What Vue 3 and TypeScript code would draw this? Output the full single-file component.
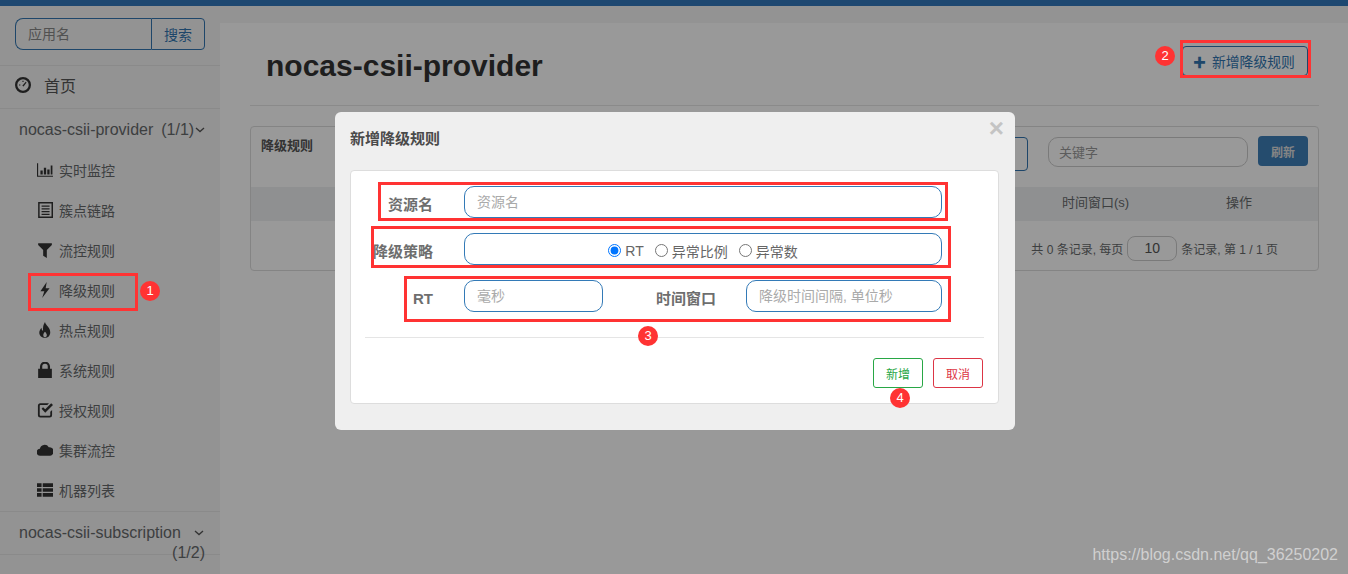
<template>
  <div class="page">
    <div class="topbar"></div>
    <div class="layout">
      <aside class="sidebar">
        <div class="search">
          <input class="search-input" placeholder="应用名" />
          <button class="search-btn">搜索</button>
        </div>
        <div class="home">
          <svg class="home-icon" viewBox="1 1 14 14"><path fill-rule="evenodd" :d="icons.gauge" /></svg>
          <span>首页</span>
        </div>
        <div class="app-row app-row-first">
          <span>nocas-csii-provider</span>
          <span class="count">(1/1)</span>
          <svg class="chevron" viewBox="0 0 10 6"><path d="M1 1l4 3.6L9 1" /></svg>
        </div>
        <ul class="nav">
          <li v-for="item in navItems" :key="item.label" class="nav-item">
            <svg class="nav-icon" viewBox="1 1 14 14"><path fill-rule="evenodd" :d="item.icon" /></svg>
            <span>{{ item.label }}</span>
          </li>
        </ul>
        <div class="app-row app-row-second">
          <span>nocas-csii-subscription</span>
          <svg class="chevron" viewBox="0 0 10 6"><path d="M1 1l4 3.6L9 1" /></svg>
          <span class="count-wrap">(1/2)</span>
        </div>
      </aside>

      <main class="main">
        <header class="main-header">
          <h1>nocas-csii-provider</h1>
          <button class="add-btn"><span class="plus">✚</span>新增降级规则</button>
        </header>
        <section class="panel">
          <div class="panel-head">
            <span class="panel-title">降级规则</span>
            <div class="panel-tools">
              <div class="hidden-select"></div>
              <input class="keyword" placeholder="关键字" />
              <button class="refresh">刷新</button>
            </div>
          </div>
          <div class="table-head">
            <span class="col-window">时间窗口(s)</span>
            <span class="col-action">操作</span>
          </div>
          <div class="pager">
            <span>共 0 条记录, 每页</span>
            <input class="page-size" value="10" />
            <span>条记录, 第 1 / 1 页</span>
          </div>
        </section>
      </main>
    </div>

    <div class="overlay">
      <div class="modal">
        <div class="modal-title">新增降级规则</div>
        <span class="close">×</span>
        <form class="card" @submit.prevent>
          <div class="row">
            <label class="label">资源名</label>
            <input class="field grow" placeholder="资源名" />
          </div>
          <div class="row">
            <label class="label">降级策略</label>
            <div class="field grow radios">
              <label v-for="(opt, i) in strategies" :key="opt" class="radio">
                <input type="radio" name="grade" :checked="i === 0" />{{ opt }}
              </label>
            </div>
          </div>
          <div class="row">
            <label class="label">RT</label>
            <input class="field rt" placeholder="毫秒" />
            <label class="label label-window">时间窗口</label>
            <input class="field grow" placeholder="降级时间间隔, 单位秒" />
          </div>
          <div class="divider"></div>
          <div class="actions">
            <button class="btn btn-ok">新增</button>
            <button class="btn btn-cancel">取消</button>
          </div>
        </form>
      </div>
    </div>

    <!-- red marks drawn over the screenshot -->
    <div v-for="m in marks" :key="m.top + '-' + m.left" class="mark" :style="m"></div>
    <div v-for="b in badges" :key="b.n" class="badge" :style="{ left: b.x + 'px', top: b.y + 'px' }">{{ b.n }}</div>
    <div class="watermark">https://blog.csdn.net/qq_36250202</div>
  </div>
</template>

<script setup lang="ts">
const icons = {
  gauge:
    "M8 1a7 7 0 1 1 0 14A7 7 0 0 1 8 1z M8 3a5 5 0 1 0 0 10A5 5 0 0 0 8 3z M7.4 8.6l3-3.4.7.6-2.6 3.6z M4.5 7.5h1.2v1H4.5z M7.5 4.2h1v1.2h-1z",
  bars: "M1 2h1v11h13v1H1z M4 8.5h2V12H4z M7 6h2v6H7z M10 7.5h2V12h-2z M13 4h1.5v8H13z",
  list: "M2 1h13v14H2z M3.3 2.3v11.4h10.4V2.3z M5 4h7v1.2H5z M5 6.4h7v1.2H5z M5 8.8h7V10H5z M5 11.2h7v1.2H5z",
  filter: "M2 2h12v1.6L9.6 8v7L6.4 13V8L2 3.6z",
  bolt: "M9.5 1L4 9h3.4L5.5 15 12 6.5H8.6z",
  fire: "M8 1c.5 3 4.6 4.5 4.6 9 0 3-2 5-4.6 5S3 13 3 10.5c0-2 1-3.5 2-4.5 0 1.5.5 2.5 1.3 2.7C6 6 6.5 3 8 1z M8 9.5c-1 1-1.5 2-1.5 3 0 1 .7 1.8 1.5 1.8s1.6-.8 1.6-1.8c0-1-.7-2-1.6-3z",
  lock: "M2 7h1.6V5a4.4 4.4 0 0 1 8.8 0v2H14v8H2z M5.6 7h4.8V5a2.4 2.4 0 0 0-4.8 0z",
  check:
    "M4 2h7.5L10 3.6H4a.6.6 0 0 0-.6.6v8.2c0 .3.3.6.6.6h8c.3 0 .6-.3.6-.6V9.6L14.2 8v4.4A2.2 2.2 0 0 1 12 14.6H4a2.2 2.2 0 0 1-2.2-2.2V4.2A2.2 2.2 0 0 1 4 2z M5 6.8l1.3-1.3L8.2 7.4 13.4 2.2 15 3.6 8.2 10.4z",
  cloud: "M4 13a3 3 0 0 1-.5-6 4.2 4.2 0 0 1 7.8-1.4A3.7 3.7 0 0 1 12.5 13z",
  rows: "M1 2h4v3.4H1z M6 2h9v3.4H6z M1 6.4h4v3.2H1z M6 6.4h9v3.2H6z M1 10.6h4V14H1z M6 10.6h9V14H6z",
};

const navItems = [
  { label: "实时监控", icon: icons.bars },
  { label: "簇点链路", icon: icons.list },
  { label: "流控规则", icon: icons.filter },
  { label: "降级规则", icon: icons.bolt },
  { label: "热点规则", icon: icons.fire },
  { label: "系统规则", icon: icons.lock },
  { label: "授权规则", icon: icons.check },
  { label: "集群流控", icon: icons.cloud },
  { label: "机器列表", icon: icons.rows },
];

const strategies = ["RT", "异常比例", "异常数"];

const box = (left: number, top: number, width: number, height: number) => ({
  left: left + "px",
  top: top + "px",
  width: width + "px",
  height: height + "px",
});

const marks = [
  box(28, 273, 110, 38),
  box(1180, 40, 131, 38),
  box(378, 182, 570, 39),
  box(371, 226, 580, 42),
  box(404, 276, 547, 46),
];

const badges = [
  { n: 1, x: 140, y: 281 },
  { n: 2, x: 1155, y: 46 },
  { n: 3, x: 638, y: 326 },
  { n: 4, x: 890, y: 388 },
];
</script>

<style>
html,
body {
  margin: 0;
  overflow: hidden;
}
</style>

<style scoped>
.page {
  position: relative;
  width: 1348px;
  height: 574px;
  overflow: hidden;
  background: #f5f5f5;
  font-family: "Liberation Sans", "Noto Sans CJK SC", sans-serif;
  color: #676a6c;
  font-size: 14px;
}

.topbar {
  height: 6px;
  background: #3379bd;
}

.layout {
  display: flex;
  height: 568px;
}

.sidebar {
  width: 220px;
  flex: none;
}

.search {
  display: flex;
  margin: 12px 15px 15px;
  height: 32px;
}

.search-input {
  width: 136px;
  box-sizing: border-box;
  border: 1px solid #3276b1;
  border-right: none;
  border-radius: 8px 0 0 8px;
  background: transparent;
  padding: 0 12px;
  font: inherit;
  outline: none;
}

.search-input::placeholder {
  color: #888;
}

.search-btn {
  width: 54px;
  border: 1px solid #3276b1;
  border-radius: 0 4px 4px 0;
  background: transparent;
  color: #3276b1;
  font: inherit;
  padding: 0;
}

.home {
  display: flex;
  align-items: center;
  box-sizing: border-box;
  height: 44px;
  padding: 0 0 4px 15px;
  border-top: 1px solid #e7e7e7;
  border-bottom: 1px solid #e7e7e7;
  font-size: 16px;
  color: #555;
}

.home-icon {
  width: 16px;
  height: 16px;
  margin-right: 13px;
  fill: #333;
}

.app-row {
  position: relative;
  display: flex;
  align-items: center;
  height: 40px;
  padding-left: 19px;
  font-size: 16px;
  white-space: nowrap;
}

.app-row-first {
  padding-top: 1px;
  box-sizing: border-box;
}

.count {
  margin-left: 8px;
}

.chevron {
  width: 10px;
  height: 6px;
  margin-left: 1px;
  fill: none;
  stroke: #555;
  stroke-width: 1.3;
}

.nav {
  list-style: none;
  margin: 1px 0 1px;
  padding: 0;
}

.nav-item {
  display: flex;
  align-items: center;
  height: 40px;
  padding-left: 37px;
}

.nav-icon {
  width: 16px;
  height: 16px;
  margin-right: 6px;
  fill: #333;
}

.app-row-second {
  height: 42px;
  border-top: 1px solid #e7e7e7;
  border-bottom: 1px solid #e7e7e7;
}

.app-row-second .chevron {
  margin-left: 13px;
}

.count-wrap {
  position: absolute;
  right: 15px;
  top: 32px;
}

.main {
  flex: 1;
  margin-top: 17px;
  padding: 0 29px 0 30px;
  background: #fff;
}

.main-header {
  display: flex;
  align-items: center;
  justify-content: space-between;
  height: 82px;
  border-bottom: 1px solid #e7e7e7;
  padding: 0 11px 0 16px;
}

h1 {
  margin: 4px 0 0;
  font-size: 30px;
  font-weight: 700;
  color: #333;
}

.add-btn {
  display: flex;
  align-items: center;
  height: 30px;
  width: 126px;
  box-sizing: border-box;
  margin-top: -6px;
  padding: 0 0 0 10px;
  border: 1px solid #3276b1;
  border-radius: 4px;
  background: #fff;
  color: #3276b1;
  font: inherit;
  font-size: 13.8px;
}

.plus {
  margin-right: 6px;
  font-size: 13px;
}

.panel {
  margin-top: 20px;
  height: 145px;
  box-sizing: border-box;
  border: 1px solid #ddd;
  border-radius: 4px;
}

.panel-head {
  display: flex;
  justify-content: space-between;
  box-sizing: border-box;
  height: 60px;
  padding: 9px 10px 0;
  font-weight: 700;
}

.panel-title {
  font-size: 13px;
  line-height: 20px;
  color: #555;
}

.panel-tools {
  display: flex;
  align-items: flex-start;
  gap: 10px;
}

.hidden-select {
  width: 80px;
  height: 34px;
  margin: 1px 10px 0 0;
  box-sizing: border-box;
  border: 1px solid #3276b1;
  border-radius: 4px;
}

.keyword {
  width: 200px;
  height: 30px;
  margin-top: 1px;
  box-sizing: border-box;
  border: 1px solid #ccc;
  border-radius: 10px;
  padding: 0 10px;
  font: 13px "Liberation Sans", "Noto Sans CJK SC", sans-serif;
}

.keyword::placeholder {
  color: #999;
}

.refresh {
  width: 50px;
  height: 30px;
  border: none;
  border-radius: 4px;
  background: #3f7fb8;
  color: #ddd;
  font: 700 12px "Liberation Sans", "Noto Sans CJK SC", sans-serif;
  padding: 0;
}

.table-head {
  position: relative;
  height: 34px;
  background: #eef0f2;
  font-size: 13px;
  line-height: 32px;
}

.col-window {
  position: absolute;
  left: 811px;
}

.col-action {
  position: absolute;
  left: 975px;
}

.pager {
  display: flex;
  align-items: center;
  justify-content: flex-end;
  gap: 4px;
  height: 48px;
  margin-top: 3px;
  padding-right: 40px;
  font-size: 12px;
}

.page-size {
  width: 50px;
  height: 25px;
  box-sizing: border-box;
  border: 1px solid #ccc;
  border-radius: 8px;
  text-align: center;
  font: 14px "Liberation Sans", sans-serif;
  color: #555;
}

.overlay {
  position: absolute;
  inset: 0;
  display: flex;
  justify-content: center;
  align-items: flex-start;
  padding: 112px 0 0 2px;
  background: rgba(0, 0, 0, 0.4);
}

.modal {
  position: relative;
  width: 680px;
  height: 318px;
  box-sizing: border-box;
  padding: 0 16px 0 15px;
  background: #efefef;
  border-radius: 6px;
}

.modal-title {
  height: 58px;
  line-height: 54px;
  font-size: 15px;
  font-weight: 700;
  color: #4a4a4a;
}

.close {
  position: absolute;
  right: 11px;
  top: 1px;
  font-size: 26px;
  line-height: 30px;
  font-weight: 700;
  color: #c4c4c4;
}

.card {
  height: 234px;
  box-sizing: border-box;
  padding: 15px 14px 0 0;
  background: #fff;
  border: 1px solid #ddd;
  border-radius: 4px;
}

.row {
  display: flex;
  height: 32px;
  margin-bottom: 15px;
  margin-right: 42px;
}

.label {
  flex: none;
  width: 82px;
  margin-right: 31px;
  padding-top: 9px;
  box-sizing: border-box;
  text-align: right;
  font-size: 15px;
  line-height: 20px;
  font-weight: 700;
  color: #6e6e6e;
  white-space: nowrap;
}

.label-window {
  width: 113px;
  margin-right: 30px;
}

.field {
  box-sizing: border-box;
  height: 32px;
  border: 1px solid #337ab7;
  border-radius: 10px;
  background: #fff;
  padding: 0 12px;
  font: 14px "Liberation Sans", "Noto Sans CJK SC", sans-serif;
  color: #555;
  outline: none;
}

.field::placeholder {
  color: #aaa;
}

.grow {
  flex: 1;
  min-width: 0;
}

.rt {
  width: 139px;
  flex: none;
}

.radios {
  display: flex;
  justify-content: center;
  align-items: center;
  padding-top: 3px;
  gap: 11px;
}

.radio {
  display: flex;
  align-items: center;
  white-space: nowrap;
  color: #666;
}

.radio input {
  margin: 0 4px 0 0;
}

.divider {
  height: 1px;
  margin: 25px 0 20px 14px;
  background: #e5e5e5;
}

.actions {
  display: flex;
  justify-content: flex-end;
  gap: 10px;
  margin-right: 1px;
}

.btn {
  width: 50px;
  height: 30px;
  padding: 0;
  background: #fff;
  border-radius: 3px;
  font: 12px "Liberation Sans", "Noto Sans CJK SC", sans-serif;
}

.btn-ok {
  border: 1px solid #28a745;
  color: #28a745;
}

.btn-cancel {
  border: 1px solid #dc3545;
  color: #dc3545;
}

.mark {
  position: absolute;
  box-sizing: border-box;
  border: 3px solid #ff3333;
}

.badge {
  position: absolute;
  width: 20px;
  height: 20px;
  border-radius: 50%;
  background: #ff3333;
  color: #fff;
  font-size: 13px;
  line-height: 20px;
  text-align: center;
}

.watermark {
  position: absolute;
  right: 10px;
  top: 545px;
  font-size: 16px;
  line-height: 20px;
  color: rgba(255, 255, 255, 0.55);
}
</style>
